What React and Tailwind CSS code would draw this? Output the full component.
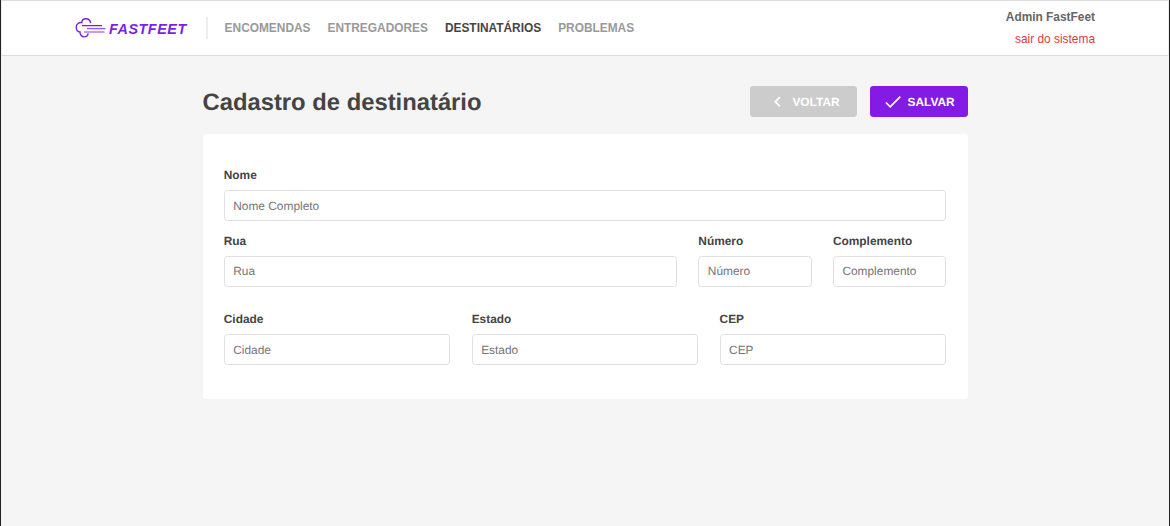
const navItems = [
  { label: 'ENCOMENDAS' },
  { label: 'ENTREGADORES' },
  { label: 'DESTINATÁRIOS', active: true },
  { label: 'PROBLEMAS' },
];

function Logo() {
  return (
    <div className="flex items-center">
      <svg className="h-[22px] w-[32px]" viewBox="0 0 32 22" fill="none" stroke="#7d1fe3">
        <path
          strokeWidth="1.4"
          d="M15.6 6.2C15.3 3.5 13.2 1.8 10.8 1.8C8.6 1.8 7 3.3 6.7 5.6C3.5 5.2 1.2 7.5 1.2 10.3C1.2 12.8 2.9 14.8 5 15C4.9 17.8 6.7 19.9 9.1 19.9C11.4 19.9 12.9 18.4 13.2 16.4"
        />
        <path strokeWidth="1.3" d="M7 8.6H27" />
        <path strokeWidth="1.4" strokeOpacity="0.75" d="M12 11.6H30.5" />
        <path strokeWidth="1.7" strokeOpacity="0.52" d="M9 15H29.5" />
      </svg>
      <span className="ml-[2px] pt-[2px] text-[14.4px] leading-[20px] font-bold tracking-[0.52px] text-[#7d1fe3] italic">
        FASTFEET
      </span>
    </div>
  );
}

function Header() {
  return (
    <header className="flex h-[56px] items-start justify-between border border-[#dddddd] border-x-[#eeeeee] bg-white px-[73px]">
      <div className="flex items-center pt-[16px]">
        <Logo />
        <div className="ml-[19px] h-[22px] w-[2px] bg-[#eeeeee]" />
        <nav className="ml-[16.9px] flex gap-[17px] text-[11.9px] leading-[16px] font-bold">
          {navItems.map((item) => (
            <a key={item.label} className={item.active ? 'text-[#444444]' : 'text-[#999999]'}>
              {item.label}
            </a>
          ))}
        </nav>
      </div>
      <div className="flex flex-col items-end gap-[6px] pt-[8px] text-[11.9px] leading-[16px]">
        <strong className="text-[#666666]">Admin FastFeet</strong>
        <a className="text-[#de3b3b]">sair do sistema</a>
      </div>
    </header>
  );
}

function Field({ label, placeholder = label }) {
  return (
    <label className="flex min-w-0 flex-col text-[11.9px] font-bold text-[#444444]">
      <span className="leading-[16px]">{label}</span>
      <input
        placeholder={placeholder}
        className="mt-[7px] h-[31px] w-full rounded-[3.4px] border border-[#e0e0e0] bg-white px-[8.5px] text-[11.9px] font-normal [text-rendering:geometricPrecision] placeholder:text-[#757575]"
      />
    </label>
  );
}

export default function App() {
  return (
    <div className="h-[526px] overflow-hidden border-x border-[#222222] bg-[#f5f5f5] font-['Liberation_Sans',Arial,sans-serif]">
      <Header />
      <main className="mx-auto w-[765px] pt-[29.75px] [text-rendering:geometricPrecision]">
        <div className="flex h-[31.5px] items-center justify-between">
          <h1 className="pt-[3px] text-[23.8px] leading-[28px] font-bold text-[#444444]">Cadastro de destinatário</h1>
          <div className="flex gap-[12.75px] text-[11.9px] font-bold text-white">
            <button className="flex h-[31.5px] w-[107px] items-center rounded-[3.4px] bg-[#cccccc] pl-[23px] [text-rendering:geometricPrecision]">
              <svg className="h-[12px] w-[8px]" viewBox="0 0 8 12" fill="none" stroke="#ffffff" strokeWidth="1.8">
                <path d="M6.9 1.2L2.3 5.8L6.9 10.4" />
              </svg>
              <span className="ml-[11.2px] pt-[3px]">VOLTAR</span>
            </button>
            <button className="flex h-[31.5px] w-[97.5px] items-center rounded-[3.4px] bg-[#841be4] pl-[14.5px] [text-rendering:geometricPrecision]">
              <svg className="h-[14px] w-[17px]" viewBox="0 0 17 14" fill="none" stroke="#ffffff" strokeWidth="1.7">
                <path d="M0.9 7.5L5.2 11.8L15.3 1.7" />
              </svg>
              <span className="ml-[6px] pt-[3px]">SALVAR</span>
            </button>
          </div>
        </div>
        <form className="mt-[17px] h-[264.3px] rounded-[3.4px] bg-white px-[21.25px] pt-[33px]">
          <Field label="Nome" placeholder="Nome Completo" />
          <div className="mt-[11.5px] grid grid-cols-[4fr_1fr_1fr] gap-[21.25px]">
            <Field label="Rua" />
            <Field label="Número" />
            <Field label="Complemento" />
          </div>
          <div className="mt-[24.5px] grid grid-cols-3 gap-[21.25px]">
            <Field label="Cidade" />
            <Field label="Estado" />
            <Field label="CEP" />
          </div>
        </form>
      </main>
    </div>
  );
}
